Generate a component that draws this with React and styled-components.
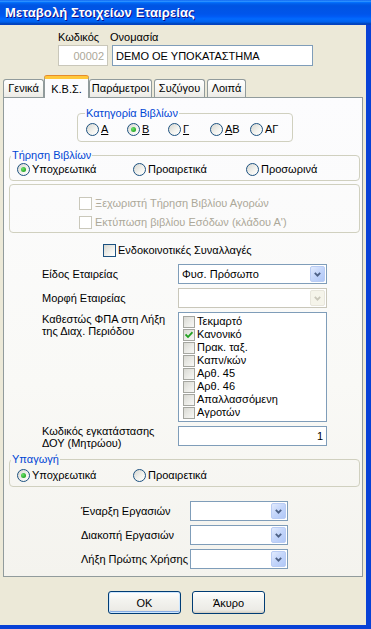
import React from "react";
import styled, { createGlobalStyle } from "styled-components";

const Global = createGlobalStyle`
  html, body { margin: 0; padding: 0; }
  body {
    width: 371px; height: 629px; overflow: hidden; background: #ECE9D8;
    font-family: "Liberation Sans", Arial, sans-serif; font-size: 11px; color: #000;
  }
  *, *::before, *::after { box-sizing: border-box; }
`;

const Window = styled.div`
  width: 371px; height: 629px; display: flex; flex-direction: column;
`;

const TitleBar = styled.div`
  height: 25px; flex: none; display: flex; align-items: center; padding-left: 5px;
  background: linear-gradient(to bottom, #0058EE 0%, #3593FF 4%, #288EFF 6%, #127DFF 8%,
    #036FFC 10%, #0262EE 14%, #0057E5 20%, #0054E3 24%, #0055EB 56%, #005BF5 66%,
    #026AFE 76%, #0062EF 86%, #0052D6 92%, #0040AB 96%, #0841D6 100%);
  color: #fff; font-weight: bold; font-size: 13px; letter-spacing: 0.1px;
  text-shadow: 1px 1px 0 #0F1089;
`;

const Frame = styled.div`
  flex: 1; display: flex; flex-direction: column; background: #ECE9D8;
  border-right: 5px solid #0841D6; border-bottom: 4px solid #0841D6;
  box-shadow: inset -1px 0 0 #ECE9D8;
  padding-top: 6px;
`;

const HeaderGrid = styled.div`
  display: grid; grid-template-columns: 50px 201px; column-gap: 4px;
  row-gap: 1px; padding-left: 58px; grid-template-rows: 13px 21px;
`;

const HeaderLabel = styled.div`
  line-height: 13px; margin-left: ${p => p.$shift || 0}px; white-space: nowrap;
`;

const TextBox = styled.div`
  height: ${p => p.$h || 21}px; background: #fff; display: flex; align-items: center;
  border: 1px solid ${p => (p.$disabled ? "#C9C7BA" : "#7F9DB9")};
  color: ${p => (p.$disabled ? "#ACA899" : "#000")};
  justify-content: ${p => (p.$right ? "flex-end" : "flex-start")};
  padding: 0 3px; white-space: nowrap; overflow: hidden;
`;

const TabStrip = styled.div`
  display: flex; align-items: flex-end; gap: 2px; height: 21px;
  margin: 10px 0 0 3px; position: relative; z-index: 1;
`;

const Tab = styled.div`
  width: ${p => p.$w}px; flex: none; text-align: center; white-space: nowrap;
  border: 1px solid #919B9C; border-bottom: none; border-radius: 3px 3px 0 0;
  ${p => p.$active ? `
    height: 22px; margin: 0 -2px -1px -2px; padding-top: 4px; line-height: 13px;
    background: #FCFCFE; border-top: 3px solid #FFC83C;
    box-shadow: inset 0 0 0 0 transparent, 0 -1px 0 #E68B2C;
  ` : `
    height: 18px; padding-top: 2px; line-height: 13px;
    background: linear-gradient(to bottom, #FFFFFF 0%, #F7F7F4 50%, #ECEBE6 100%);
  `}
`;

const Panel = styled.div`
  margin-left: 3px; width: 360px; height: 480px; flex: none;
  border: 1px solid #919B9C;
  background: linear-gradient(to bottom, #FCFCFE 0%, #F9F9F6 60%, #F4F3EE 100%);
  display: flex; flex-direction: column;
`;

const Group = styled.fieldset`
  margin: ${p => p.$mt}px 0 0 ${p => p.$ml}px; width: ${p => p.$w}px;
  border: 1px solid #D0D0BF; border-radius: 4px;
  padding: ${p => p.$pt}px 0 ${p => p.$pb}px 0; min-width: 0;
  color: ${p => (p.$disabled ? "#ACA899" : "#000")};
`;

const Legend = styled.legend`
  color: #0046D5; padding: 0 1px; margin-left: ${p => p.$ml}px; line-height: 13px;
`;

const RadioRow = styled.div`
  display: flex; align-items: center; height: 14px; padding-left: ${p => p.$pl}px;
`;

const RadioItem = styled.label`
  display: flex; align-items: center; gap: 2px; white-space: nowrap;
  width: ${p => (p.$w ? `${p.$w}px` : "auto")}; flex: none;
`;

const RadioCircle = styled.span`
  width: 13px; height: 13px; border-radius: 50%; border: 1px solid #1C5180; flex: none;
  background: linear-gradient(135deg, #D6D6D0 0%, #F4F4F0 60%, #FFFFFF 100%);
  display: flex; align-items: center; justify-content: center;
  &::after {
    content: ""; width: 5px; height: 5px; border-radius: 50%;
    background: radial-gradient(circle at 35% 35%, #6AE36A 0%, #21A121 80%);
    display: ${p => (p.$checked ? "block" : "none")};
  }
`;

const CheckRows = styled.div`
  display: flex; flex-direction: column; gap: 6px; padding-left: 69px;
`;

const CheckItem = styled.label`
  display: flex; align-items: center; gap: ${p => p.$gap ?? 3}px; white-space: nowrap;
  height: ${p => p.$h || 13}px; line-height: 13px;
  color: ${p => (p.$disabled ? "#ACA899" : "#000")};
  margin: ${p => p.$margin || "0"};
`;

const boxStyles = {
  normal: "border: 1px solid #1C5180; background: linear-gradient(135deg, #D6D6D0 0%, #F2F2EE 60%, #FFFFFF 100%);",
  disabled: "border: 1px solid #CAC8BB; background: #FFFFFF;",
  list: "border: 1px solid #A5A6A0; background: linear-gradient(135deg, #D9D9D3 0%, #EDEDE9 60%, #F8F8F6 100%);",
};

const Box = styled.span`
  width: ${p => p.$size || 13}px; height: ${p => p.$size || 13}px; flex: none;
  display: flex; align-items: center; justify-content: center;
  ${p => boxStyles[p.$variant || "normal"]}
`;

const Check = () => (
  <svg width="8" height="8" viewBox="0 0 8 8">
    <path d="M0.5 3.5 L3 6 L7.5 1.2" fill="none" stroke="#21A121" strokeWidth="1.8" />
  </svg>
);

const FormGrid = styled.div`
  display: grid; grid-template-columns: ${p => p.$cols};
  grid-template-rows: ${p => p.$rows}; row-gap: ${p => p.$gap}px;
  margin: ${p => p.$mt}px 0 0 ${p => p.$ml}px;
`;

const FieldLabel = styled.div`
  align-self: ${p => (p.$top ? "start" : "center")};
  margin-top: ${p => p.$mt || 0}px; line-height: 12px; white-space: nowrap;
`;

const ComboBox = styled.div`
  display: flex; align-items: stretch; background: #fff; height: 20px;
  border: 1px solid ${p => (p.$disabled ? "#C9C7BA" : "#7F9DB9")};
  padding: 1px;
`;

const ComboText = styled.div`
  flex: 1; display: flex; align-items: center; padding-left: 2px; white-space: nowrap;
`;

const DropButton = styled.div`
  width: 15px; flex: none; border-radius: 2px; display: flex; align-items: center; justify-content: center;
  ${p => p.$disabled ? `
    border: 1px solid #E8E6DC; background: #F5F4EA;
  ` : `
    border: 1px solid #B9CCF4; background: linear-gradient(135deg, #E2EBFD 0%, #C3D5FA 50%, #B1C8F7 100%);
  `}
`;

const Chevron = ({ color }) => (
  <svg width="7" height="5" viewBox="0 0 7 5">
    <path d="M0.8 0.8 L3.5 3.6 L6.2 0.8" fill="none" stroke={color} strokeWidth="1.8" />
  </svg>
);

const Combo = ({ value, disabled }) => (
  <ComboBox $disabled={disabled}>
    <ComboText>{value}</ComboText>
    <DropButton $disabled={disabled}>
      <Chevron color={disabled ? "#C9C7BA" : "#4D6185"} />
    </DropButton>
  </ComboBox>
);

const ListBox = styled.div`
  border: 1px solid #7F9DB9; background: #fff; padding: 2px 0 0 4px;
  display: flex; flex-direction: column;
`;

const ButtonRow = styled.div`
  display: flex; gap: 11px; padding-left: 108px; margin-top: 14px;
`;

const Button = styled.button`
  width: 73px; height: 23px; border: 1px solid #003C74; border-radius: 3px;
  font-family: "Liberation Sans", Arial, sans-serif; font-size: 11px; color: #000;
  background: linear-gradient(to bottom, #FFFFFF 0%, #F3F3EF 40%, #ECEBE6 85%, #D6D0C5 100%);
  box-shadow: ${p => p.$default
    ? "inset 0 0 0 1px #CEE7FF, inset 0 -1px 0 1px #89ADE4"
    : "inset 0 -1px 0 0 #D6D0C5"};
  padding: 0;
`;

const vatItems = [
  ["Τεκμαρτό", false], ["Κανονικό", true], ["Πρακ. ταξ.", false], ["Καπν/κών", false],
  ["Αρθ. 45", false], ["Αρθ. 46", false], ["Απαλλασσόμενη", false], ["Αγροτών", false],
];

const tabs = [
  ["Γενικά", 41, false], ["Κ.Β.Σ.", 45, true], ["Παράμετροι", 63, false],
  ["Συζύγου", 51, false], ["Λοιπά", 39, false],
];

export default function App() {
  return (
    <>
      <Global />
      <Window>
        <TitleBar>Μεταβολή Στοιχείων Εταιρείας</TitleBar>
        <Frame>
          <HeaderGrid>
            <HeaderLabel>Κωδικός</HeaderLabel>
            <HeaderLabel $shift={-2}>Ονομασία</HeaderLabel>
            <TextBox $disabled $right>00002</TextBox>
            <TextBox>DEMO ΟΕ ΥΠΟΚΑΤΑΣΤΗΜΑ</TextBox>
          </HeaderGrid>

          <TabStrip>
            {tabs.map(([t, w, a]) => (
              <Tab key={t} $w={w} $active={a}>{t}</Tab>
            ))}
          </TabStrip>

          <Panel>
            <Group $mt={9} $ml={73} $w={216} $pt={2} $pb={5}>
              <Legend $ml={7}>Κατηγορία Βιβλίων</Legend>
              <RadioRow $pl={8}>
                <RadioItem $w={41}><RadioCircle /><u>Α</u></RadioItem>
                <RadioItem $w={41}><RadioCircle $checked /><u>Β</u></RadioItem>
                <RadioItem $w={42}><RadioCircle /><u>Γ</u></RadioItem>
                <RadioItem $w={40}><RadioCircle /><span><u>Α</u>Β</span></RadioItem>
                <RadioItem><RadioCircle />ΑΓ</RadioItem>
              </RadioRow>
            </Group>

            <Group $mt={7} $ml={5} $w={351} $pt={0} $pb={4}>
              <Legend $ml={1}>Τήρηση Βιβλίων</Legend>
              <RadioRow $pl={7}>
                <RadioItem $w={116}><RadioCircle $checked />Υποχρεωτικά</RadioItem>
                <RadioItem $w={113}><RadioCircle />Προαιρετικά</RadioItem>
                <RadioItem><RadioCircle />Προσωρινά</RadioItem>
              </RadioRow>
            </Group>

            <Group $mt={3} $ml={5} $w={351} $pt={12} $pb={3} $disabled>
              <CheckRows>
                <CheckItem $disabled><Box $variant="disabled" />Ξεχωριστή Τήρηση Βιβλίου Αγορών</CheckItem>
                <CheckItem $disabled><Box $variant="disabled" />Εκτύπωση βιβλίου Εσόδων (κλάδου Α')</CheckItem>
              </CheckRows>
            </Group>

            <CheckItem $margin="11px 0 0 99px" $gap={2}>
              <Box />Ενδοκοινοτικές Συναλλαγές
            </CheckItem>

            <FormGrid $cols="136px 149px" $rows="20px 20px 110px 20px" $gap={4} $mt={7} $ml={38}>
              <FieldLabel>Είδος Εταιρείας</FieldLabel>
              <Combo value="Φυσ. Πρόσωπο" />
              <FieldLabel>Μορφή Εταιρείας</FieldLabel>
              <Combo disabled />
              <FieldLabel $top $mt={1}>Καθεστώς ΦΠΑ στη Λήξη<br />της Διαχ. Περιόδου</FieldLabel>
              <ListBox>
                {vatItems.map(([t, c]) => (
                  <CheckItem key={t} $gap={2}>
                    <Box $variant="list" $size={12}>{c && <Check />}</Box>{t}
                  </CheckItem>
                ))}
              </ListBox>
              <FieldLabel $top $mt={-1}>Κωδικός εγκατάστασης<br />ΔΟΥ (Μητρώου)</FieldLabel>
              <TextBox $h={20} $right>1</TextBox>
            </FormGrid>

            <Group $mt={7} $ml={5} $w={351} $pt={2} $pb={4}>
              <Legend $ml={1}>Υπαγωγή</Legend>
              <RadioRow $pl={7}>
                <RadioItem $w={116}><RadioCircle $checked />Υποχρεωτικά</RadioItem>
                <RadioItem><RadioCircle />Προαιρετικά</RadioItem>
              </RadioRow>
            </Group>

            <FormGrid $cols="109px 98px" $rows="20px 20px 20px" $gap={4} $mt={14} $ml={77}>
              <FieldLabel>Έναρξη Εργασιών</FieldLabel>
              <Combo />
              <FieldLabel>Διακοπή Εργασιών</FieldLabel>
              <Combo />
              <FieldLabel>Λήξη Πρώτης Χρήσης</FieldLabel>
              <Combo />
            </FormGrid>
          </Panel>

          <ButtonRow>
            <Button $default>OK</Button>
            <Button>Άκυρο</Button>
          </ButtonRow>
        </Frame>
      </Window>
    </>
  );
}
